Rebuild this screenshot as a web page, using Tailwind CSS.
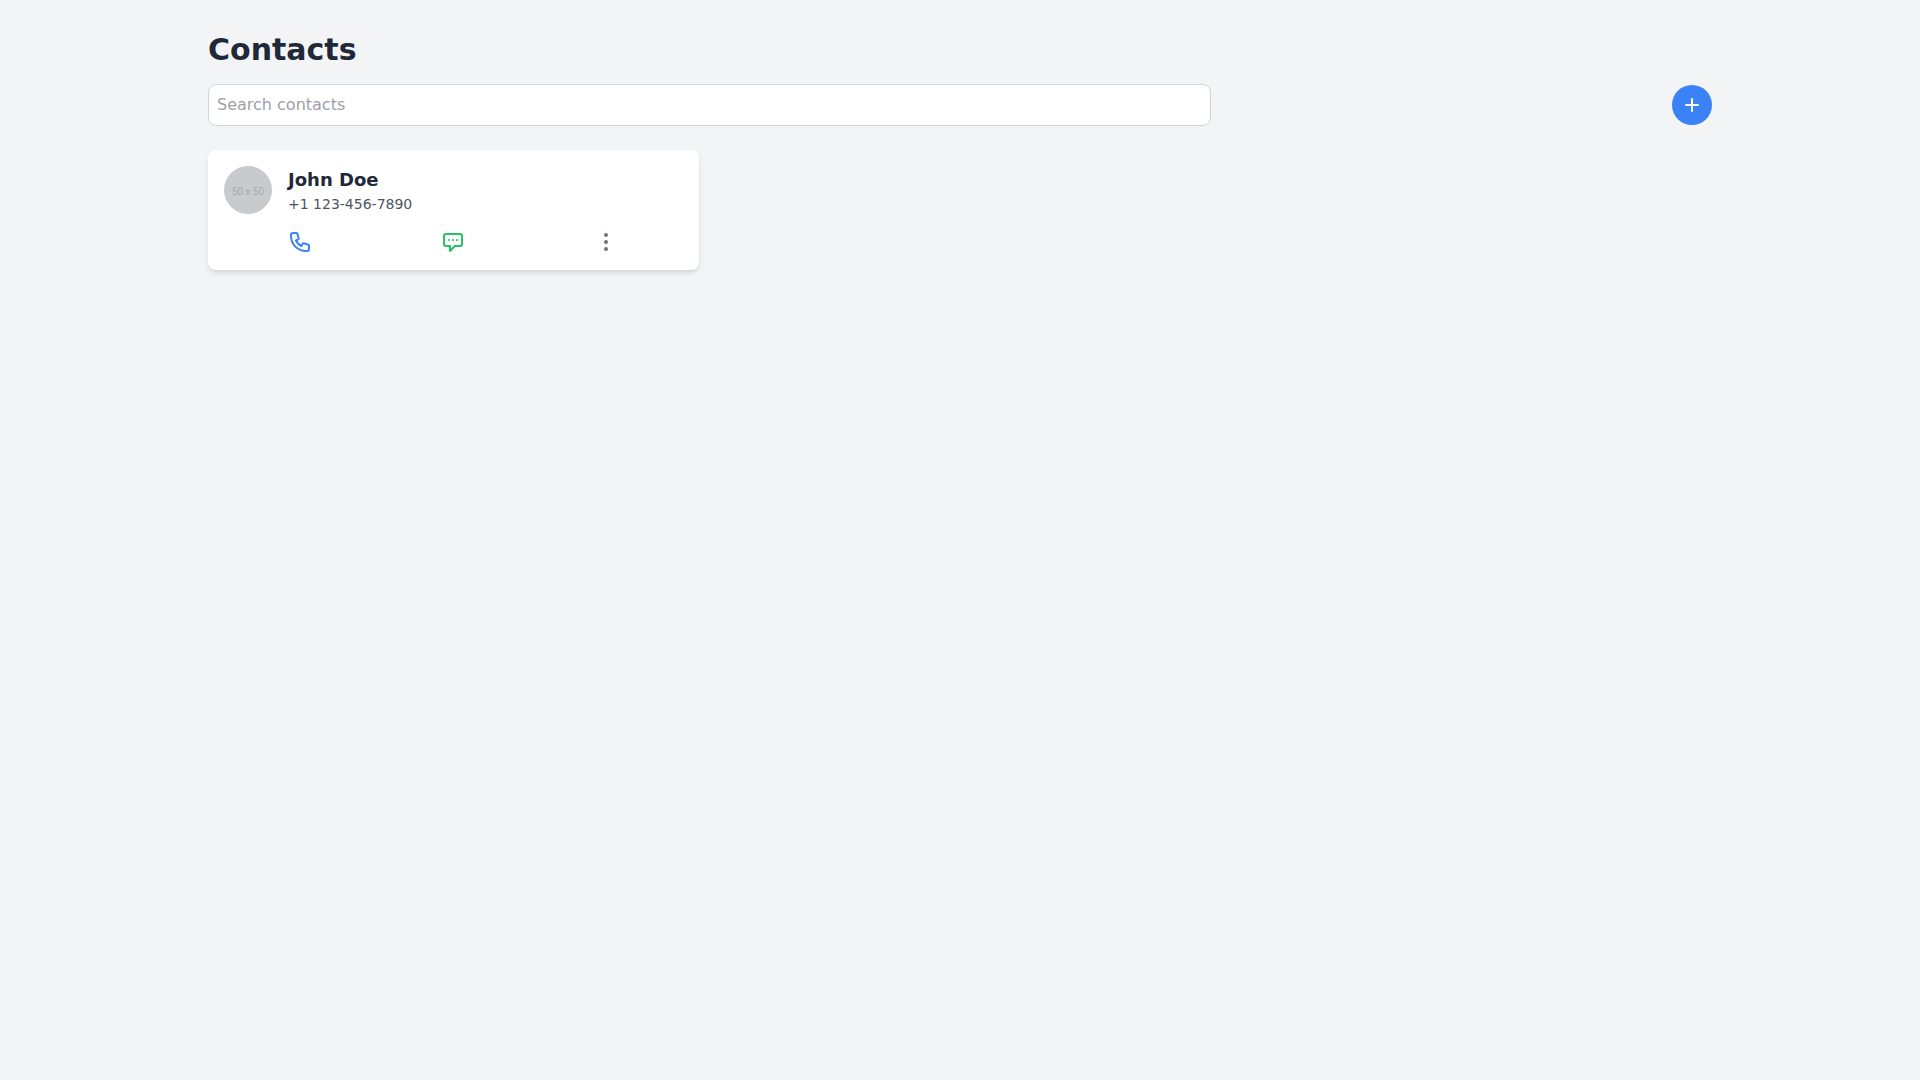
<!DOCTYPE html>
<html lang="en">

<head>
    <meta charset="UTF-8">
    <meta name="viewport" content="width=device-width, initial-scale=1.0">
    <title>Contacts</title>
    <script src="https://cdn.jsdelivr.net/npm/@tailwindcss/browser@4"></script>
</head>

<body class="bg-[#f3f4f6] min-h-screen font-['DejaVu_Sans',sans-serif]">
    <div class="container mx-auto px-4 py-8">
        <!-- Header -->
        <h1 class="text-3xl font-bold text-[#1f2937] mb-4">Contacts</h1>

        <!-- Search and add -->
        <div class="flex items-center justify-between mb-6">
            <input type="text" id="search" placeholder="Search contacts" aria-label="Search contacts"
                class="w-2/3 p-2 bg-white border border-[#d1d5db] rounded-lg placeholder:text-[#9ca1a8] focus:outline-none focus:border-[#3b82f6]">
            <button type="button" aria-label="Add contact" class="bg-[#3b82f6] hover:bg-[#2563eb] text-white rounded-full p-2">
                <svg class="w-6 h-6" fill="none" stroke="currentColor" viewBox="0 0 24 24">
                    <path stroke-linecap="round" stroke-linejoin="round" stroke-width="2" d="M12 6v6m0 0v6m0-6h6m-6 0H6" />
                </svg>
            </button>
        </div>

        <!-- Contact list -->
        <div class="grid grid-cols-1 md:grid-cols-2 lg:grid-cols-3 gap-4">
            <div class="bg-white rounded-lg shadow-md p-4">
                <div class="flex items-center">
                    <div class="w-12 h-12 rounded-full bg-[#c8cacd] text-[#969ca3] mr-4 flex items-center justify-center">
                        <span class="font-['Roboto',sans-serif] font-light text-[10px] leading-3 pt-1">50 x 50</span>
                    </div>
                    <div>
                        <h2 class="text-lg font-bold text-[#1f2937]">John Doe</h2>
                        <p class="text-sm text-[#4b5563]">+1 123-456-7890</p>
                    </div>
                </div>
                <div class="flex justify-around mt-4">
                    <button type="button" aria-label="Call" class="text-[#3b82f6] hover:text-[#2563eb]">
                        <svg class="w-6 h-6" fill="none" stroke="currentColor" viewBox="0 0 24 24">
                            <path stroke-linecap="round" stroke-linejoin="round" stroke-width="2" d="M3 5a2 2 0 012-2h3.28a1 1 0 01.948.684l1.498 4.493a1 1 0 01-.502 1.21l-2.257 1.13a11.042 11.042 0 005.516 5.516l1.13-2.257a1 1 0 011.21-.502l4.493 1.498a1 1 0 01.684.949V19a2 2 0 01-2 2h-1C9.716 21 3 14.284 3 6V5z" />
                        </svg>
                    </button>
                    <button type="button" aria-label="Message" class="text-[#22c55e] hover:text-[#16a34a]">
                        <svg class="w-6 h-6" fill="none" stroke="currentColor" viewBox="0 0 24 24">
                            <path stroke-linecap="round" stroke-linejoin="round" stroke-width="2" d="M8 10h.01M12 10h.01M16 10h.01M9 16H5a2 2 0 01-2-2V6a2 2 0 012-2h14a2 2 0 012 2v8a2 2 0 01-2 2h-5l-5 5v-5z" />
                        </svg>
                    </button>
                    <button type="button" aria-label="More options" class="text-[#6b7280] hover:text-[#4b5563]">
                        <svg class="w-6 h-6" fill="none" stroke="currentColor" viewBox="0 0 24 24">
                            <path stroke-linecap="round" stroke-linejoin="round" stroke-width="2" d="M12 5v.01M12 12v.01M12 19v.01M12 6a1 1 0 110-2 1 1 0 010 2zm0 7a1 1 0 110-2 1 1 0 010 2zm0 7a1 1 0 110-2 1 1 0 010 2z" />
                        </svg>
                    </button>
                </div>
            </div>
        </div>
    </div>
</body>

</html>
